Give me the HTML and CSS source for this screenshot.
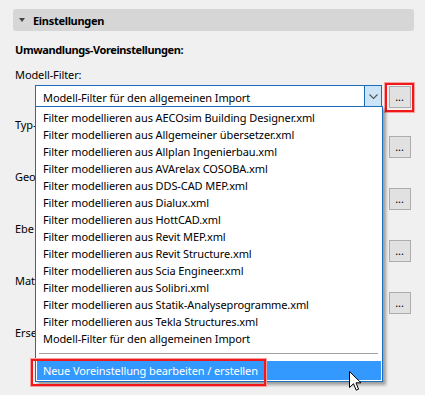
FILE: index.html
```html
<!DOCTYPE html>
<html lang="de">
<head>
<meta charset="utf-8">
<title>Einstellungen</title>
<link rel="stylesheet" href="styles.css">
</head>
<body>
<div class="panel">
  <div class="section-head"><span class="tri"></span><span class="head-text">Einstellungen</span></div>
  <div class="group-title">Umwandlungs-Voreinstellungen:</div>

  <div class="field">
    <div class="label">Modell-Filter:</div>
    <div class="row">
      <div class="combo open">
        <span class="combo-text">Modell-Filter für den allgemeinen Import</span>
        <span class="combo-arrow"><svg width="9" height="6" viewBox="0 0 9 6"><path d="M0.5 0.5 L4.5 4.5 L8.5 0.5" fill="none" stroke="#555" stroke-width="1.1"/></svg></span>
      </div>
      <div class="hl-box"><div class="dots">...</div></div>
    </div>
  </div>

  <div class="field">
    <div class="label">Typ-</div>
    <div class="row"><div class="combo"></div><div class="plain-box"><div class="dots">...</div></div></div>
  </div>
  <div class="field">
    <div class="label">Geo</div>
    <div class="row"><div class="combo"></div><div class="plain-box"><div class="dots">...</div></div></div>
  </div>
  <div class="field">
    <div class="label">Ebe</div>
    <div class="row"><div class="combo"></div><div class="plain-box"><div class="dots">...</div></div></div>
  </div>
  <div class="field">
    <div class="label">Mat</div>
    <div class="row"><div class="combo"></div><div class="plain-box"><div class="dots">...</div></div></div>
  </div>
  <div class="field">
    <div class="label">Erse</div>
    <div class="row"><div class="combo"></div></div>
  </div>
</div>

<div class="popup">
  <div class="item">Filter modellieren aus AECOsim Building Designer.xml</div>
  <div class="item">Filter modellieren aus Allgemeiner übersetzer.xml</div>
  <div class="item">Filter modellieren aus Allplan Ingenierbau.xml</div>
  <div class="item">Filter modellieren aus AVArelax COSOBA.xml</div>
  <div class="item">Filter modellieren aus DDS-CAD MEP.xml</div>
  <div class="item">Filter modellieren aus Dialux.xml</div>
  <div class="item">Filter modellieren aus HottCAD.xml</div>
  <div class="item">Filter modellieren aus Revit MEP.xml</div>
  <div class="item">Filter modellieren aus Revit Structure.xml</div>
  <div class="item">Filter modellieren aus Scia Engineer.xml</div>
  <div class="item">Filter modellieren aus Solibri.xml</div>
  <div class="item">Filter modellieren aus Statik-Analyseprogramme.xml</div>
  <div class="item">Filter modellieren aus Tekla Structures.xml</div>
  <div class="item">Modell-Filter für den allgemeinen Import</div>
  <div class="sep"></div>
  <div class="item active">Neue Voreinstellung bearbeiten / erstellen</div>
</div>
<div class="hl-item"></div>

<svg class="cursor" width="13" height="21" viewBox="0 0 13 21">
  <path d="M0.5 0.5 L0.5 16.5 L4.5 12.7 L7.2 19.2 L9.6 18.2 L7 11.8 L12 11.8 Z" fill="#fff" stroke="#000" stroke-width="1" stroke-linejoin="miter"/>
</svg>
</body>
</html>
```

FILE: styles.css
```css
* { box-sizing: border-box; }
html, body { margin: 0; padding: 0; }
body {
  background: #f0f0f0;
  width: 425px;
  height: 395px;
  overflow: hidden;
  position: relative;
  font-family: "Noto Sans", "DejaVu Sans", sans-serif;
  font-size: 11px;
  letter-spacing: -0.1px;
  color: #000;
}
.panel {
  padding: 9px 11px 0 13px;
}
.section-head {
  height: 22px;
  background: #d6d6d6;
  border-radius: 3px;
  display: flex;
  align-items: center;
  padding-left: 6px;
  font-weight: bold;
  letter-spacing: -0.3px;
}
.tri {
  width: 0; height: 0;
  border-left: 3.5px solid transparent;
  border-right: 3.5px solid transparent;
  border-top: 4px solid #444;
  margin-right: 8px;
}
.group-title {
  margin-top: 11px;
  line-height: 16px;
  padding-left: 2px;
  font-weight: bold;
  letter-spacing: -0.4px;
}
.field {
  margin-top: 9px;
  height: 52px;
}
.field + .field { margin-top: 0; }
.field:nth-child(3) { height: 50px; }
.label {
  line-height: 16px;
  padding-left: 2px;
}
.row {
  margin-top: 2px;
  display: flex;
  align-items: center;
  height: 24px;
}
.combo {
  margin-left: 22px;
  width: 348px;
  height: 24px;
  border: 1px solid #7a7a7a;
  background: #fff;
  display: flex;
  align-items: center;
}
.combo.open {
  border-color: #1a6dbb;
}
.combo-text {
  flex: 1;
  padding-left: 7px;
  white-space: nowrap;
}
.combo-arrow {
  width: 17px;
  height: 100%;
  background: #cce4f7;
  border-left: 1px solid #1a6dbb;
  display: flex;
  align-items: center;
  justify-content: center;
}
.hl-box, .plain-box {
  margin-left: 3px;
  width: 29px;
  height: 29px;
  display: flex;
  align-items: center;
  justify-content: center;
}
.hl-box {
  border: 2px solid #f01818;
  box-shadow: 0 0 0 1px #f8a0a0;
}
.dots {
  width: 22px;
  height: 22px;
  background: #e1e1e1;
  border: 1px solid #adadad;
  display: flex;
  align-items: center;
  justify-content: center;
  line-height: 1;
  padding-bottom: 2px;
  font-size: 11px;
}
.popup {
  position: absolute;
  left: 35px;
  top: 106px;
  width: 348px;
  background: #fff;
  border: 1px solid #1a6dbb;
  padding: 2px 1px 1px 1px;
  box-shadow: 3px 3px 3px rgba(0,0,0,0.35);
}
.item {
  height: 17px;
  line-height: 17px;
  padding-left: 6px;
  white-space: nowrap;
}
.sep {
  height: 1px;
  background: #a0a0a0;
  margin: 6px 3px 7px 2px;
}
.item.active {
  height: 19px;
  line-height: 19px;
  background: #3399ff;
  color: #fff;
}
.hl-item {
  position: absolute;
  left: 31px;
  top: 359px;
  width: 235px;
  height: 27px;
  border: 2px solid #f01818;
  box-shadow: 0 0 0 1px #f8a0a0;
}
.cursor {
  position: absolute;
  left: 349px;
  top: 371px;
}
```
